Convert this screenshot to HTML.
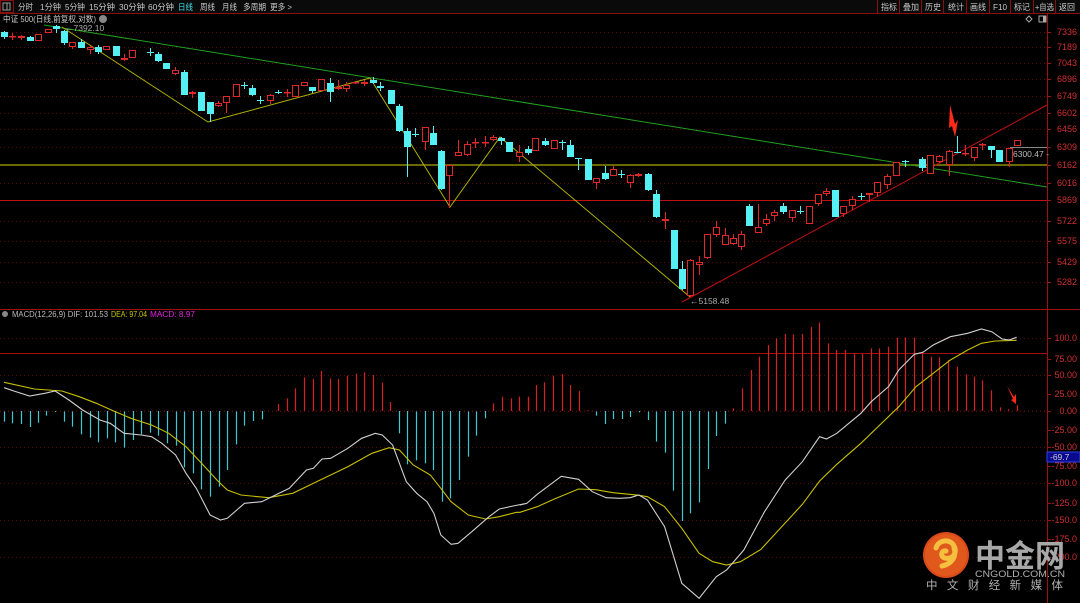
<!DOCTYPE html>
<html><head><meta charset="utf-8">
<style>
html,body{margin:0;padding:0;background:#000;width:1080px;height:603px;overflow:hidden}
svg{display:block}
text{font-family:"Liberation Sans","Noto Sans CJK SC",sans-serif}
</style></head>
<body>
<svg id="s" width="1080" height="603" viewBox="0 0 1080 603" xmlns="http://www.w3.org/2000/svg">
<rect width="1080" height="603" fill="#000"/>
<!-- top bar -->
<rect x="0" y="0" width="1080" height="13" fill="#0a0a0a"/>
<line x1="0" y1="13.5" x2="1080" y2="13.5" stroke="#8a0f0f"/>
<rect x="0.5" y="0.5" width="13" height="12" fill="none" stroke="#8a0f0f"/>
<rect x="3" y="3" width="7" height="7" fill="none" stroke="#999" stroke-width="1"/>
<line x1="7" y1="3" x2="7" y2="10" stroke="#999"/>
<g font-size="8.5" fill="#c8c8c8" lengthAdjust="spacingAndGlyphs">
<text x="18" y="10" textLength="15" lengthAdjust="spacingAndGlyphs">分时</text>
<text x="40" y="10" textLength="21" lengthAdjust="spacingAndGlyphs">1分钟</text>
<text x="65" y="10" textLength="20" lengthAdjust="spacingAndGlyphs">5分钟</text>
<text x="89" y="10" textLength="26" lengthAdjust="spacingAndGlyphs">15分钟</text>
<text x="119" y="10" textLength="26" lengthAdjust="spacingAndGlyphs">30分钟</text>
<text x="148" y="10" textLength="26" lengthAdjust="spacingAndGlyphs">60分钟</text>
<text x="178" y="10" fill="#3fe0e8" textLength="15" lengthAdjust="spacingAndGlyphs">日线</text>
<text x="200" y="10" textLength="15" lengthAdjust="spacingAndGlyphs">周线</text>
<text x="222" y="10" textLength="15" lengthAdjust="spacingAndGlyphs">月线</text>
<text x="243" y="10" textLength="23" lengthAdjust="spacingAndGlyphs">多周期</text>
<text x="270" y="10" textLength="22" lengthAdjust="spacingAndGlyphs">更多 &gt;</text>
</g>
<g font-size="8.5" fill="#c8c8c8">
<text x="881" y="10" textLength="16" lengthAdjust="spacingAndGlyphs">指标</text>
<text x="903" y="10" textLength="16" lengthAdjust="spacingAndGlyphs">叠加</text>
<text x="925" y="10" textLength="16" lengthAdjust="spacingAndGlyphs">历史</text>
<text x="948" y="10" textLength="16" lengthAdjust="spacingAndGlyphs">统计</text>
<text x="970" y="10" textLength="16" lengthAdjust="spacingAndGlyphs">画线</text>
<text x="993" y="10" textLength="14" lengthAdjust="spacingAndGlyphs">F10</text>
<text x="1014" y="10" textLength="16" lengthAdjust="spacingAndGlyphs">标记</text>
<text x="1035" y="10" textLength="19" lengthAdjust="spacingAndGlyphs">+自选</text>
<text x="1059" y="10" textLength="16" lengthAdjust="spacingAndGlyphs">返回</text>
</g>
<g stroke="#8a0f0f">
<line x1="877.5" y1="0" x2="877.5" y2="13"/><line x1="899.5" y1="0" x2="899.5" y2="13"/>
<line x1="921.5" y1="0" x2="921.5" y2="13"/><line x1="943.5" y1="0" x2="943.5" y2="13"/>
<line x1="966.5" y1="0" x2="966.5" y2="13"/><line x1="989.5" y1="0" x2="989.5" y2="13"/>
<line x1="1010.5" y1="0" x2="1010.5" y2="13"/><line x1="1033.5" y1="0" x2="1033.5" y2="13"/>
<line x1="1055.5" y1="0" x2="1055.5" y2="13"/>
</g>
<text x="3" y="22" font-size="8.5" fill="#c8c8c8" textLength="93" lengthAdjust="spacingAndGlyphs">中证 500(日线,前复权,对数)</text>
<circle cx="103" cy="19" r="4" fill="#888"/>
<path d="M1026 19 l3 -3 l3 3 l-3 3z" fill="none" stroke="#aaa"/>
<rect x="1039" y="16" width="7" height="6" fill="none" stroke="#aaa"/>
<rect x="1043" y="16" width="3" height="6" fill="#aaa"/>
<!-- frame -->
<line x1="1047.5" y1="14" x2="1047.5" y2="603" stroke="#a01010"/>
<line x1="0" y1="309.5" x2="1080" y2="309.5" stroke="#a01010"/>
<line x1="0" y1="353.5" x2="1047" y2="353.5" stroke="#a01010"/>
<g id="grid"></g>
<g id="main"></g>
<g id="macd"></g>
<!-- labels -->
<text x="65" y="31" font-size="8.5" fill="#aaa">←7392.10</text>
<text x="690" y="304" font-size="8.5" fill="#aaa">←5158.48</text>
<line x1="1010" y1="147.5" x2="1047" y2="147.5" stroke="#888"/>
<text x="1013" y="157" font-size="8.5" fill="#bbb">6300.47 -</text>
<path d="M950 105 L955 124 L958 120 L955 137 L952 126 L949 128 Z" fill="#ff2a1a"/>
<path d="M1007 386 L1014 397 L1016 394 L1016 404 L1011 400 L1013 399 Z" fill="#ff2a1a"/>
<text x="12" y="317" font-size="8" fill="#bbb" textLength="96" lengthAdjust="spacingAndGlyphs">MACD(12,26,9)  DIF: 101.53</text>
<text x="111" y="317" font-size="8" fill="#c8c800" textLength="36" lengthAdjust="spacingAndGlyphs">DEA: 97.04</text>
<text x="150" y="317" font-size="8" fill="#e020e0" textLength="45" lengthAdjust="spacingAndGlyphs">MACD: 8.97</text>
<circle cx="5" cy="314" r="3" fill="#888"/>
<rect x="1047" y="452" width="33" height="10" fill="#0a0a90" stroke="#3040e0"/>
<text x="1050" y="460" font-size="8.5" fill="#ccc">-69.7</text>
<!-- logo -->
<circle cx="946" cy="555" r="23" fill="#d84a1a"/>
<circle cx="946" cy="555" r="21" fill="#e0581c"/>
<path d="M936 548 c2 -8 14 -10 18 -2 c4 7 -2 14 -9 12 c-5 -1 -4 -8 1 -7 M954 548 c3 8 -2 16 -12 18" fill="none" stroke="#f5c040" stroke-width="5" stroke-linecap="round"/>
<text x="975" y="567" font-size="31" font-weight="bold" fill="#a8a8a8" textLength="90" lengthAdjust="spacingAndGlyphs">中金网</text>
<text x="975" y="577" font-size="9.5" fill="#b0b0b0" textLength="90" lengthAdjust="spacingAndGlyphs">CNGOLD.COM.CN</text>
<text x="926" y="589" font-size="11.5" fill="#b0b0b0" textLength="137" lengthAdjust="spacing">中文财经新媒体</text>
</svg>
<script>
const NS="http://www.w3.org/2000/svg";
function el(p,t,a){const e=document.createElementNS(NS,t);for(const k in a)e.setAttribute(k,a[k]);p.appendChild(e);return e;}
const g=document.getElementById('grid'),m=document.getElementById('main'),mc=document.getElementById('macd');
const rows=[[32,'7336'],[47,'7189'],[63,'7043'],[79,'6896'],[96,'6749'],[113,'6602'],[129,'6456'],[147,'6309'],[165,'6162'],[183,'6016'],[200,'5869'],[221,'5722'],[241,'5575'],[262,'5429'],[282,'5282']];
rows.forEach(r=>{el(g,'line',{x1:0,x2:1047,y1:r[0]+.5,y2:r[0]+.5,stroke:'#5a0a0a','stroke-dasharray':'1 3'});
el(g,'line',{x1:1047,x2:1051,y1:r[0]+.5,y2:r[0]+.5,stroke:'#a01010'});
const t=el(g,'text',{x:1077,y:r[0]+3,'font-size':9,fill:'#d03030','text-anchor':'end'});t.textContent=r[1];});
const mrows=[[338,'100.0'],[359,'75.00'],[375,'50.00'],[394,'25.00'],[411,'0.00'],[430,'-25.00'],[447,'-50.00'],[466,'-75.00'],[483,'-100.0'],[503,'-125.0'],[520,'-150.0'],[539,'-175.0'],[557,'-200.0']];
mrows.forEach(r=>{el(g,'line',{x1:1047,x2:1051,y1:r[0]+.5,y2:r[0]+.5,stroke:'#a01010'});
const t=el(g,'text',{x:1077,y:r[0]+3,'font-size':9,fill:'#d03030','text-anchor':'end'});t.textContent=r[1];});
[338,375,411,447,483,520,557].forEach(y=>el(g,'line',{x1:0,x2:1047,y1:y+.5,y2:y+.5,stroke:'#5a0a0a','stroke-dasharray':'1 3'}));
el(g,'line',{x1:0,x2:1047,y1:165,y2:165,stroke:'#8a8a00','stroke-width':1.5});
el(g,'line',{x1:0,x2:1047,y1:200.5,y2:200.5,stroke:'#c01010','stroke-width':1});
el(g,'line',{x1:44,y1:25,x2:1047,y2:187,stroke:'#20a020'});
el(g,'polyline',{points:'62,27 208,122 370,78 450,207 500,137 690,297',fill:'none',stroke:'#b0b000'});
el(g,'line',{x1:682,y1:302,x2:1047,y2:105,stroke:'#c01010'});
const C=[[4,32,37,31,39,'c'],[12,36,37,33,40,'r'],[20,36,38,35,40,'r'],[29,37,41,36,41,'c'],[37,34,41,34,41,'r'],[46,29,33,29,33,'r'],[54,26,29,25,33,'c'],[62,31,43,30,45,'c'],[70,42,47,42,49,'r'],[78,42,48,39,48,'c'],[87,47,50,46,54,'r'],[95,47,52,45,54,'c'],[103,46,50,46,50,'r'],[112,46,56,46,56,'c'],[120,58,60,54,61,'r'],[128,50,58,50,58,'r'],[145,52,53,48,56,'c'],[153,54,61,52,62,'c'],[161,63,69,63,69,'c'],[169,70,74,67,75,'r'],[178,72,95,70,95,'c'],[186,92,94,91,98,'r'],[195,92,111,92,111,'c'],[203,102,114,102,122,'c'],[211,103,106,101,107,'r'],[219,96,103,96,113,'r'],[228,84,97,84,97,'r'],[236,85,86,82,89,'c'],[244,88,95,85,96,'c'],[252,100,101,96,104,'c'],[261,95,101,94,104,'r'],[269,92,93,90,94,'c'],[278,92,93,89,97,'r'],[286,85,97,85,97,'r'],[294,82,86,82,86,'r'],[302,87,91,87,93,'c'],[311,79,91,79,91,'r'],[319,83,92,78,102,'c'],[327,87,89,80,90,'r'],[335,85,89,82,92,'r'],[344,82,83,82,84,'r'],[352,82,84,80,86,'r'],[361,80,83,77,84,'c'],[368,86,88,82,91,'c'],[378,90,104,90,104,'c'],[386,106,131,104,132,'c'],[394,131,147,128,177,'c'],[402,134,135,128,137,'c'],[411,127,142,127,150,'r'],[419,133,145,126,145,'c'],[427,151,189,150,190,'c'],[435,165,176,165,208,'r'],[443,152,156,140,156,'r'],[452,144,155,141,156,'r'],[460,142,143,138,148,'r'],[469,142,143,136,147,'r'],[477,137,140,135,141,'r'],[485,138,141,137,145,'c'],[493,142,152,142,152,'c'],[502,152,157,145,162,'r'],[511,149,153,146,155,'c'],[518,138,151,138,151,'r'],
[544,141,145,138,146,'c'],[553,140,149,140,149,'r'],[561,142,143,140,150,'c'],[568,145,157,140,157,'c'],[576,158,159,158,170,'c'],[586,159,180,159,180,'c'],[594,178,183,178,189,'r'],[602,173,179,166,180,'c'],[610,169,176,166,176,'r'],[618,174,175,170,178,'c'],[626,175,183,174,188,'r'],[634,174,176,173,177,'r'],[644,174,190,173,191,'c'],[652,194,217,190,218,'c'],[660,219,221,212,229,'r'],[669,230,269,230,269,'c'],[677,269,289,261,290,'c'],[685,260,296,259,297,'r'],[693,262,265,256,275,'r'],[701,234,258,234,259,'r'],[710,227,235,221,237,'r'],[718,235,245,228,245,'r'],[726,238,244,234,245,'r'],[734,234,247,231,250,'r'],[742,206,226,204,226,'c'],[750,227,233,204,233,'r'],[758,219,224,214,226,'r'],[766,212,216,210,221,'r'],[775,206,212,203,214,'c'],[783,210,218,210,222,'r'],[791,211,212,206,214,'c'],[800,206,224,206,224,'r'],[808,194,204,194,206,'r'],[816,191,194,188,196,'r'],[825,190,217,190,217,'c'],[833,206,214,206,217,'r'],[841,199,206,196,210,'r'],[850,196,197,193,200,'c'],[858,193,195,193,202,'r'],[866,182,193,182,197,'r'],[875,176,185,174,189,'r'],[884,162,176,162,176,'r'],[893,161,162,160,167,'c'],[909,159,168,157,171,'c'],[917,155,174,155,174,'r'],[926,156,162,155,163,'r'],[935,151,165,150,176,'r'],[943,152,153,136,153,'c'],[951,153,154,145,156,'r'],[959,147,158,147,161,'r'],[967,144,145,143,150,'r'],[976,146,150,146,158,'c'],[984,150,162,150,162,'c'],[993,148,162,148,167,'r'],[1001,140,146,140,146,'r']];
C.forEach(c=>{let x=c[0]<525?c[0]*1.0331:520+(c[0]-520)*1.0331;x=Math.round(x)+.5;
const col=c[5]=='c'?'#54f0f4':'#e02828';
el(m,'line',{x1:x,x2:x,y1:c[3],y2:c[4],stroke:col});
let h=Math.max(c[2]-c[1],1);
if(c[5]=='c')el(m,'rect',{x:x-3.5,y:c[1],width:7,height:h,fill:col});
else el(m,'rect',{x:x-3,y:c[1]+.5,width:6,height:Math.max(h-1,0.5),fill:'#000',stroke:col});});
const B6=[[12,350,'c'],[36,355,'c'],[61,357,'c'],[86,366,'c'],[110,353,'c'],[135,332,'c'],[160,321,'c'],[185,350,'c'],[210,365,'c'],[235,388,'c'],[260,398,'c'],[285,412,'c'],[310,400,'c'],[335,412,'c'],[360,428,'c'],[385,405,'c'],[410,388,'c'],[435,383,'c'],[460,392,'c'],[485,415,'c'],[510,422,'c'],[535,487,'c'],[560,505,'c'],[585,553,'c'],[610,575,'c'],[635,545,'c'],[660,495,'c'],[685,418,'c'],[710,362,'c'],[735,348,'c'],[760,343,'c'],[808,297,'r'],[833,280,'r'],[858,250,'r'],[884,217,'r'],[908,222,'r'],[933,198,'r'],[958,220,'r'],[983,222,'r'],[1008,212,'r'],[1033,206,'r'],[1058,202,'r'],[1083,210,'r'],[1108,233,'r'],[1133,291,'r'],[1158,385,'c'],[1183,478,'c'],[1208,466,'c'],[1233,475,'c'],[1258,495,'c'],[1283,590,'c'],[1308,580,'c'],[1333,525,'c'],[1358,455,'c'],[1383,392,'c'],[1408,340,'c'],[1433,295,'r'],[1458,275,'r'],[1483,280,'r'],[1508,275,'r'],[1533,275,'r']];
const B7=[[22,277,'r'],[46,240,'r'],[71,232,'r'],[96,212,'r'],[121,207,'r'],[146,240,'r'],[170,258,'r'],[195,316,'r'],[220,332,'c'],[246,357,'c'],[271,342,'c'],[295,342,'c'],[320,336,'c'],[345,322,'c'],[371,345,'c'],[396,410,'c'],[420,443,'c'],[445,557,'c'],[470,648,'c'],[495,625,'c'],[520,592,'c'],[545,492,'c'],[570,393,'c'],[595,356,'c'],[620,310,'r'],[645,250,'r'],[670,195,'r'],[695,155,'r'],[719,120,'r'],[744,100,'r'],[769,87,'r'],[794,88,'r'],[820,87,'r'],[844,66,'r'],[869,52,'r'],[894,115,'r'],[919,135,'r'],[944,135,'r'],[969,145,'r'],[994,147,'r'],[1019,130,'r'],[1043,130,'r'],[1068,125,'r'],[1094,98,'r'],[1118,97,'r'],[1143,98,'r'],[1168,140,'r'],[1194,155,'r'],[1218,157,'r'],[1243,165,'r'],[1268,185,'r'],[1294,208,'r'],[1319,215,'r'],[1343,226,'r'],[1369,256,'r'],[1393,307,'r'],[1418,312,'r'],[1442,300,'r']];
function bar(off,b){const x=Math.round(off+b[0]/2.904)+.5,y=305+b[1]/3;
el(mc,'line',{x1:x,x2:x,y1:411,y2:y,stroke:b[2]=='c'?'#3cc8d0':'#d42020','stroke-width':1.2});}
B6.forEach(b=>bar(0,b));B7.forEach(b=>bar(520,b));
el(mc,'line',{x1:0,x2:1047,y1:411,y2:411,stroke:'#5a0a0a','stroke-dasharray':'1 3'});
function pl(off,pts){return pts.map(p=>(off+p[0]/2.904).toFixed(1)+','+(305+p[1]/3).toFixed(1)).join(' ');}
const D6=[[12,248],[40,258],[86,273],[130,265],[160,258],[200,285],[240,315],[290,345],[320,355],[360,385],[410,390],[440,395],[470,415],[510,450],[540,505],[570,550],[610,630],[640,645],[660,640],[710,595],[760,590],[800,570],[840,550],[890,495],[910,490],[935,462],[960,460],[1010,430],[1050,400],[1090,385],[1110,390],[1140,420],[1180,530],[1210,565],[1240,590],[1260,625],[1280,690],[1310,718],[1330,715],[1370,680],[1420,635],[1450,612],[1490,603],[1530,595]];
const D7=[[0,600],[20,595],[50,568],[120,514],[170,523],[210,560],[250,578],[290,580],[320,578],[345,570],[370,585],[420,665],[470,835],[520,880],[570,815],[600,795],[650,735],[710,620],[770,525],[820,470],[870,395],[890,402],[920,385],[990,325],[1020,290],[1070,245],[1100,195],[1145,148],[1170,142],[1200,120],[1250,95],[1300,85],[1340,72],[1370,80],[1400,102],[1420,105],[1442,97]];
const E6=[[12,232],[100,252],[180,258],[230,275],[280,295],[330,318],[380,340],[440,360],[490,385],[540,425],[590,480],[630,525],[660,555],[700,570],[780,578],[850,565],[930,525],[1010,485],[1080,445],[1130,428],[1160,435],[1200,480],[1250,510],[1280,550],[1310,590],[1360,630],[1410,642],[1450,635],[1500,622]];
const E7=[[0,622],[50,605],[100,582],[170,552],[220,554],[270,563],[340,570],[370,575],[420,605],[470,670],[520,745],[560,770],[600,780],[640,770],[700,733],[760,665],[820,598],[870,528],[920,478],[990,415],[1060,345],[1100,305],[1150,245],[1200,205],[1250,165],[1300,135],[1340,115],[1380,108],[1442,106]];
el(mc,'polyline',{points:pl(0,E6)+' '+pl(520,E7),fill:'none',stroke:'#c8c000','stroke-width':1.1});
el(mc,'polyline',{points:pl(0,D6)+' '+pl(520,D7),fill:'none',stroke:'#d0d0d0','stroke-width':1.1});
</script>
</body></html>
